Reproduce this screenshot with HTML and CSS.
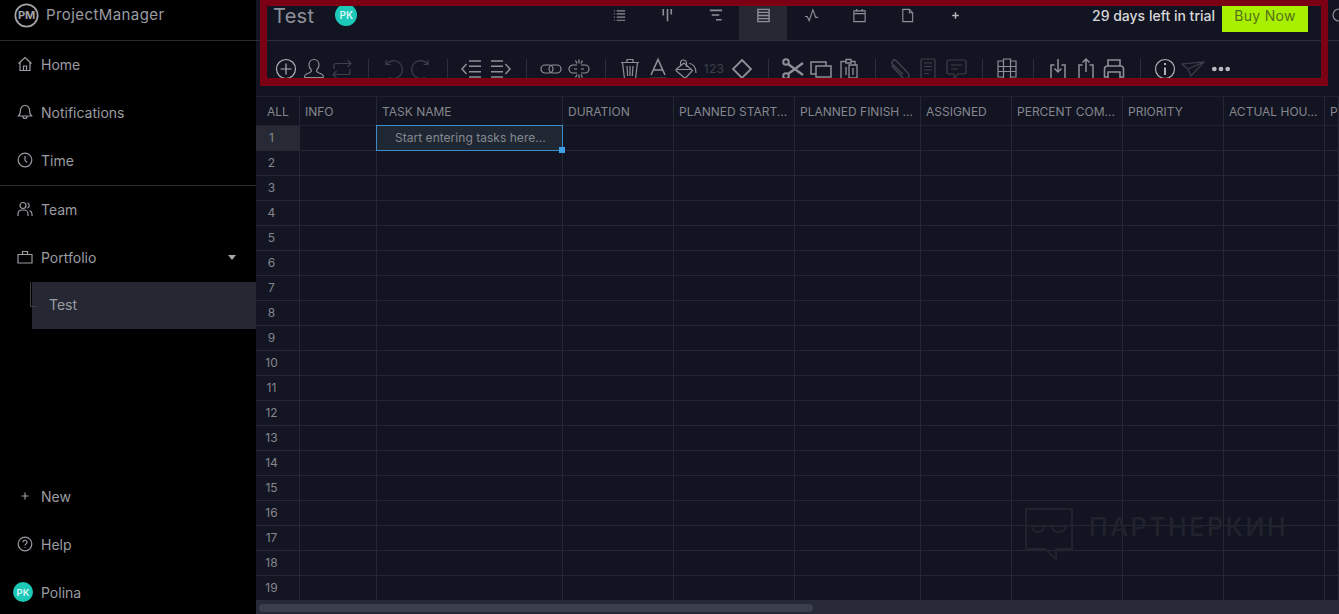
FILE: index.html
```html
<!DOCTYPE html>
<html lang="en">
<head>
<meta charset="utf-8">
<title>ProjectManager</title>
<link rel="stylesheet" href="styles.css">
</head>
<body>
<div class="app">
  <aside class="sidebar">
    <div class="brand">
      <svg class="brand-mark" viewBox="0 0 26 26"><circle cx="13" cy="13" r="11.6"/></svg>
      <span class="brand-pm">PM</span>
      <span class="brand-name">ProjectManager</span>
    </div>
    <nav class="nav nav-main">
      <a class="nav-item"><svg class="nav-icon" viewBox="0 0 16 16"><path d="M1.500 7.500 8 1.500l6.500 6M3 6.500V14.500h10V6.500M6.500 14.500V10h3v4.500"/></svg>Home</a>
      <a class="nav-item"><svg class="nav-icon" viewBox="0 0 16 16"><path d="M8 1.500a4.500 4.500 0 0 0-4.500 4.500c0 3.500-1 5-2 6h13c-1-1-2-2.500-2-6A4.500 4.500 0 0 0 8 1.500ZM6 12.500a2 2 0 0 0 4 0"/></svg>Notifications</a>
      <a class="nav-item"><svg class="nav-icon" viewBox="0 0 16 16"><circle cx="8" cy="8" r="6.800"/><path d="M8 4v4.300l2 2.200"/></svg>Time</a>
    </nav>
    <nav class="nav">
      <a class="nav-item"><svg class="nav-icon" viewBox="0 0 16 16"><circle cx="6" cy="4.500" r="3"/><path d="M1 15v-2.500A4 4 0 0 1 5 9h2a4 4 0 0 1 4 4v2M10.500 1.800a3 3 0 0 1 0 5.400M12.500 9.500a4 4 0 0 1 2.500 3.500V15"/></svg>Team</a>
      <a class="nav-item"><svg class="nav-icon" viewBox="0 0 16 16"><path d="M1 5.500h14v8.500H1zM5.500 5.500V2.500h5v3"/></svg>Portfolio<span class="caret"></span></a>
      <div class="subnav"><a class="subnav-item">Test</a></div>
    </nav>
    <nav class="nav nav-bottom">
      <a class="nav-item nav-item-low"><svg class="nav-icon" viewBox="0 0 16 16"><path d="M8 4.500v7M4.500 8h7"/></svg>New</a>
      <a class="nav-item nav-item-low"><svg class="nav-icon" viewBox="0 0 16 16"><circle cx="8" cy="8" r="6.800"/><path d="M6 6.300a2 2 0 1 1 3 1.700c-.7.400-1 .8-1 1.500M8 11.200v.8"/></svg>Help</a>
      <a class="nav-item nav-item-low nav-user"><span class="avatar avatar-side">PK</span>Polina</a>
    </nav>
  </aside>

  <main class="main">
    <header class="topbar">
      <h1 class="title">Test</h1>
      <span class="avatar avatar-top">PK</span>
      <div class="tabs">
        <a class="tab"><svg class="icon-sm" viewBox="0 0 16 16"><path d="M5 3h9M5 6.300h9M5 9.700h9M5 13h9M2 3h1M2 6.300h1M2 9.700h1M2 13h1"/></svg></a>
        <a class="tab"><svg class="icon-sm" viewBox="0 0 16 16"><path d="M3.500 1v7M8 1v13M12 1v6" stroke-width="1.700"/></svg></a>
        <a class="tab"><svg class="icon-sm" viewBox="0 0 16 16"><path d="M2 2.500h13M4 7.500h8M8.500 12.500h6" stroke-width="1.700"/></svg></a>
        <a class="tab tab-active"><svg class="icon-sm" viewBox="0 0 16 16"><path d="M2 1.500h12v13H2zM2 4.700h12M2 8h12M2 11.300h12" stroke-width="1.500"/></svg></a>
        <a class="tab"><svg class="icon-sm" viewBox="0 0 16 16"><path d="M1 9h2.500l2 4.500L9.500 2l3 8H15"/></svg></a>
        <a class="tab"><svg class="icon-sm" viewBox="0 0 16 16"><path d="M2 3h12v11.500H2zM2 6h12M5 1v3M11 1v3"/></svg></a>
        <a class="tab"><svg class="icon-sm" viewBox="0 0 16 16"><path d="M3 1.500h7l3.500 3.500v9.500H3zM10 1.500V5h3.500"/></svg></a>
        <a class="tab tab-add"><svg class="icon-sm" viewBox="0 0 16 16"><path d="M8 4.500v7M4.500 8h7" stroke-width="1.600"/></svg></a>
      </div>
      <span class="trial">29 days left in trial</span>
      <a class="buy">Buy Now</a>
      <svg class="top-extra" viewBox="0 0 16 16"><circle cx="8" cy="8" r="6"/></svg>
    </header>

    <div class="toolbar">
      <a class="tool tool-bright"><svg viewBox="0 0 24 24"><circle cx="12" cy="12" r="9.500"/><path d="M12 6.500v11M6.500 12h11"/></svg></a>
      <a class="tool"><svg viewBox="0 0 24 24"><path d="M12 2.500c-3 0-5 2.300-5 5.500 0 2.200 1 3.800 2.300 5 .5 1.300-.3 2.300-2.300 3-2.500.8-4.300 1.600-4.300 3.500v1h18.600v-1c0-1.900-1.800-2.700-4.300-3.500-2-.7-2.800-1.700-2.300-3 1.300-1.200 2.300-2.800 2.300-5 0-3.200-2-5.500-5-5.500Z"/></svg></a>
      <a class="tool tool-off"><svg viewBox="0 0 24 24"><path d="M4 12V8.500a2 2 0 0 1 2-2h15M17.500 3 21 6.500 17.500 10M20 12v3.500a2 2 0 0 1-2 2H3M6.500 14 3 17.500 6.500 21"/></svg></a>
      <span class="sep"></span>
      <a class="tool tool-off"><svg viewBox="0 0 24 24"><path d="M5 3v4.500h4.500M5 7.500A9 9 0 1 1 8 20.500"/></svg></a>
      <a class="tool tool-off"><svg viewBox="0 0 24 24"><path d="M19 3v4.500h-4.500M19 7.500A9 9 0 1 0 16 20.500"/></svg></a>
      <span class="sep"></span>
      <a class="tool"><svg viewBox="0 0 24 24"><path d="M6.500 7 2 12l4.500 5" stroke-width="1.500"/><path d="M9 4h12M9 9.300h12M9 14.700h12M9 20h12" stroke-width="1.500"/></svg></a>
      <a class="tool"><svg viewBox="0 0 24 24"><path d="M17.500 7l4.500 5-4.500 5" stroke-width="1.500"/><path d="M3 4h12M3 9.300h12M3 14.700h12M3 20h12" stroke-width="1.500"/></svg></a>
      <span class="sep"></span>
      <a class="tool"><svg viewBox="0 0 24 24"><rect x="2" y="8" width="12" height="8" rx="4"/><rect x="10" y="8" width="12" height="8" rx="4"/></svg></a>
      <a class="tool"><svg viewBox="0 0 24 24"><path d="M10 8H6a4 4 0 0 0 0 8h4M14 8h4a4 4 0 0 1 0 8h-4M7 12h3M14 12h3M12 2.500v4M12 17.500v4M8.500 3.500l1.500 3M15.500 3.500 14 6.500M8.500 20.500l1.500-3M15.500 20.500l-1.500-3"/></svg></a>
      <span class="sep"></span>
      <a class="tool"><svg viewBox="0 0 24 24"><path d="M3 5.500h18M9 5.500V2.500h6v3M4.500 5.500 6.500 22h11l2-16.500M9 9l.7 10M12 9v10M15 9l-.7 10"/></svg></a>
      <a class="tool"><svg viewBox="0 0 24 24"><path d="M5 18 12 2.500 19 18M7.500 13h9M4 21.500h16" stroke-width="1.600"/></svg></a>
      <a class="tool"><svg viewBox="0 0 24 24"><path d="M2.500 12 10 6l8.500 7.500-6 6.500c-1 1-2 1-3 0l-7-6c-.8-.7-.8-1.300 0-2ZM3 12.500h15M6.500 9V6a3 3 0 0 1 6 0v4M15 6.500c4 0 7 3.500 7 9.500"/></svg></a>
      <span class="tool tool-off tool-num">123</span>
      <a class="tool"><svg viewBox="0 0 24 24"><path d="M12 3l9 9-9 9-9-9Z" stroke-width="1.800"/></svg></a>
      <span class="sep"></span>
      <a class="tool"><svg viewBox="0 0 24 24"><circle cx="5" cy="5" r="2.800" stroke-width="2"/><circle cx="5" cy="19" r="2.800" stroke-width="2"/><path d="M7 7l15 11M7 17 22 6" stroke-width="2.400"/></svg></a>
      <a class="tool"><svg viewBox="0 0 24 24"><path d="M7 17H2V5h15v4M7 9h15v11H7z" stroke-width="1.500"/></svg></a>
      <a class="tool"><svg viewBox="0 0 24 24"><path d="M9 4.500H4V22h14v-1M14 4.500h4V8M9 2.500h5V6H9zM12 8h8v13h-8zM9 10v8M16 11v7" stroke-width="1.300"/></svg></a>
      <span class="sep"></span>
      <a class="tool tool-off"><svg viewBox="0 0 24 24"><path d="M3.500 8.500 15 21a3.500 3.500 0 0 0 5-5L8 3.500a2.500 2.500 0 0 0-3.500 3.500L15 17.500" stroke-width="1.600"/></svg></a>
      <a class="tool tool-off"><svg viewBox="0 0 24 24"><rect x="5" y="2" width="14" height="20" rx="1.500"/><path d="M8 6h8M8 9.500h8M8 13h8M8 16.500h5"/></svg></a>
      <a class="tool tool-off"><svg viewBox="0 0 24 24"><path d="M5 3h15a2 2 0 0 1 2 2v10a2 2 0 0 1-2 2h-6l-4 5v-5H5a2 2 0 0 1-2-2V5a2 2 0 0 1 2-2ZM7 8h11M7 12h7"/></svg></a>
      <span class="sep"></span>
      <a class="tool"><svg viewBox="0 0 24 24"><path d="M8.500 2h7v20h-7zM8.500 4H3v16h5.500M15.500 4H21v16h-5.500M3 9.500h5.500M3 14.500h5.500M15.500 9.500H21M15.500 14.500H21M8.500 9.500h7M8.500 14.500h7"/></svg></a>
      <span class="sep"></span>
      <a class="tool"><svg viewBox="0 0 24 24"><path d="M8.500 8H5v14h14V8h-3.500M12 2v13M8.500 11.500 12 15l3.500-3.500" stroke-width="1.500"/></svg></a>
      <a class="tool"><svg viewBox="0 0 24 24"><path d="M8.500 8H5v14h14V8h-3.500M12 15V2M8.500 5.500 12 2l3.500 3.500" stroke-width="1.500"/></svg></a>
      <a class="tool"><svg viewBox="0 0 24 24"><path d="M6 9V3h12v6M6 20H2.500v-8a3 3 0 0 1 3-3h13a3 3 0 0 1 3 3v8H18M6 15h12v7H6z" stroke-width="1.600"/></svg></a>
      <span class="sep"></span>
      <a class="tool tool-bright"><svg viewBox="0 0 24 24"><circle cx="12" cy="12" r="9.500"/><path d="M12 10.500V18M12 6v2" stroke-width="2"/></svg></a>
      <a class="tool tool-off"><svg viewBox="0 0 24 24"><path d="M1 7 23 5 10 19 7 12ZM7 12 23 5"/></svg></a>
      <a class="tool tool-dots"><svg viewBox="0 0 24 24"><circle cx="4" cy="12" r="2.800"/><circle cx="12" cy="12" r="2.800"/><circle cx="20" cy="12" r="2.800"/></svg></a>
    </div>

    <div class="grid-wrap">
      <table class="grid">
        <colgroup>
          <col class="c-all"><col class="c-info"><col class="c-task"><col class="c-dur"><col class="c-start"><col class="c-finish"><col class="c-assign"><col class="c-pct"><col class="c-prio"><col class="c-hours"><col class="c-last">
        </colgroup>
        <thead>
          <tr><th class="all">ALL</th><th>INFO</th><th>TASK NAME</th><th>DURATION</th><th>PLANNED START...</th><th>PLANNED FINISH ...</th><th>ASSIGNED</th><th>PERCENT COM...</th><th>PRIORITY</th><th>ACTUAL HOU...</th><th>PL</th></tr>
        </thead>
        <tbody>
          <tr><td class="num num-active">1</td><td></td><td class="selected"><div class="cell-edit">Start entering tasks here...<span class="handle"></span></div></td><td></td><td></td><td></td><td></td><td></td><td></td><td></td><td></td></tr>
          <tr><td class="num">2</td><td></td><td></td><td></td><td></td><td></td><td></td><td></td><td></td><td></td><td></td></tr>
          <tr><td class="num">3</td><td></td><td></td><td></td><td></td><td></td><td></td><td></td><td></td><td></td><td></td></tr>
          <tr><td class="num">4</td><td></td><td></td><td></td><td></td><td></td><td></td><td></td><td></td><td></td><td></td></tr>
          <tr><td class="num">5</td><td></td><td></td><td></td><td></td><td></td><td></td><td></td><td></td><td></td><td></td></tr>
          <tr><td class="num">6</td><td></td><td></td><td></td><td></td><td></td><td></td><td></td><td></td><td></td><td></td></tr>
          <tr><td class="num">7</td><td></td><td></td><td></td><td></td><td></td><td></td><td></td><td></td><td></td><td></td></tr>
          <tr><td class="num">8</td><td></td><td></td><td></td><td></td><td></td><td></td><td></td><td></td><td></td><td></td></tr>
          <tr><td class="num">9</td><td></td><td></td><td></td><td></td><td></td><td></td><td></td><td></td><td></td><td></td></tr>
          <tr><td class="num">10</td><td></td><td></td><td></td><td></td><td></td><td></td><td></td><td></td><td></td><td></td></tr>
          <tr><td class="num">11</td><td></td><td></td><td></td><td></td><td></td><td></td><td></td><td></td><td></td><td></td></tr>
          <tr><td class="num">12</td><td></td><td></td><td></td><td></td><td></td><td></td><td></td><td></td><td></td><td></td></tr>
          <tr><td class="num">13</td><td></td><td></td><td></td><td></td><td></td><td></td><td></td><td></td><td></td><td></td></tr>
          <tr><td class="num">14</td><td></td><td></td><td></td><td></td><td></td><td></td><td></td><td></td><td></td><td></td></tr>
          <tr><td class="num">15</td><td></td><td></td><td></td><td></td><td></td><td></td><td></td><td></td><td></td><td></td></tr>
          <tr><td class="num">16</td><td></td><td></td><td></td><td></td><td></td><td></td><td></td><td></td><td></td><td></td></tr>
          <tr><td class="num">17</td><td></td><td></td><td></td><td></td><td></td><td></td><td></td><td></td><td></td><td></td></tr>
          <tr><td class="num">18</td><td></td><td></td><td></td><td></td><td></td><td></td><td></td><td></td><td></td><td></td></tr>
          <tr><td class="num">19</td><td></td><td></td><td></td><td></td><td></td><td></td><td></td><td></td><td></td><td></td></tr>
        </tbody>
      </table>
    </div>
    <div class="hscroll"><div class="hscroll-thumb"></div></div>

    <div class="highlight-frame"></div>
    <div class="watermark">
      <svg class="watermark-mark" viewBox="0 0 50 54"><path d="M2 2h46v40H32v10L21 42H2Z"/><path d="M8 19h12a6 6 0 0 1-12 0ZM28 19h14a7 6 0 0 1-14 0ZM20 19h8"/></svg>
      <span class="watermark-text">ПАРТНЕРКИН</span>
    </div>
  </main>
</div>
</body>
</html>
```

FILE: styles.css
```css
* { box-sizing: border-box; }

html, body {
  margin: 0;
  height: 100%;
  overflow: hidden;
  background: #121421;
  font-family: Inter, "Liberation Sans", sans-serif;
}

svg { fill: none; stroke: currentColor; stroke-width: 1.2; }

.app { display: flex; height: 614px; }

/* Sidebar */
.sidebar {
  width: 256px;
  flex: none;
  display: flex;
  flex-direction: column;
  background: #000;
  color: #9a9ca2;
  font-size: 14px;
}

.brand {
  position: relative;
  height: 41px;
  flex: none;
  display: flex;
  align-items: center;
  padding: 0 0 11px 14px;
  border-bottom: 1px solid #2a2b32;
}
.brand-mark { width: 25px; height: 25px; color: #a2a4a9; margin-top: 1px; stroke-width: 1.800; }
.brand-pm {
  position: absolute;
  left: 14px;
  top: 3px;
  width: 25px;
  height: 25px;
  line-height: 25px;
  text-align: center;
  font-size: 11px;
  font-weight: 700;
  letter-spacing: -.2px;
  color: #a2a4a9;
}
.brand-name { margin-left: 7px; font-size: 15px; letter-spacing: .42px; }

.nav { display: flex; flex-direction: column; }
.nav-main { border-bottom: 1px solid #2a2b32; }
.nav-bottom { margin-top: auto; margin-bottom: -2px; }

.nav-item {
  height: 48px;
  display: flex;
  align-items: center;
  gap: 8px;
  padding: 0 0 2px 17px;
}
.nav-item-low { padding-bottom: 0; }
.nav-icon { width: 16px; height: 16px; flex: none; }
.nav-user { padding-left: 13px; }

.caret {
  margin-left: auto;
  margin-right: 20px;
  border-left: 4px solid transparent;
  border-right: 4px solid transparent;
  border-top: 5px solid #a6a8ad;
}

.subnav {
  margin: 0 0 0 30px;
  padding-left: 2px;
  height: 47px;
  position: relative;
}
.subnav::before {
  content: "";
  position: absolute;
  left: 0;
  top: 0;
  width: 6px;
  height: 24px;
  border-left: 1px solid #3a3c46;
  border-bottom: 1px solid #3a3c46;
}
.subnav-item {
  display: flex;
  align-items: center;
  height: 47px;
  padding: 0 0 2px 17px;
  background: #252833;
  color: #9a9ca2;
}

.avatar {
  display: inline-flex;
  align-items: center;
  justify-content: center;
  border-radius: 50%;
  background: #1cc8b8;
  color: #d8f7f3;
  font-weight: 600;
  flex: none;
}
.avatar-side { width: 20px; height: 20px; font-size: 9.500px; }
.avatar-top { width: 22px; height: 22px; font-size: 10px; margin-left: 21px; }

/* Main */
.main {
  position: relative;
  flex: 1;
  min-width: 0;
  display: flex;
  flex-direction: column;
  overflow: hidden;
  color: #8d8f98;
}

.topbar {
  height: 41px;
  flex: none;
  display: flex;
  align-items: flex-start;
  padding-left: 17px;
  border-bottom: 1px solid #2c2f3a;
}
.topbar > .avatar-top { margin-top: 4px; }
.title {
  margin: 4px 0 0;
  font-size: 20px;
  line-height: 24px;
  font-weight: 400;
  color: #8f929b;
  letter-spacing: .3px;
}

.tabs { display: flex; position: absolute; left: 339px; top: 0; }
.tab {
  width: 48px;
  height: 40px;
  display: flex;
  align-items: flex-start;
  justify-content: center;
  padding-top: 8px;
  color: #8d8f98;
}
.tab-active { background: #262933; }
.tab-add { color: #b4b6bb; }
.icon-sm { width: 15px; height: 15px; }

.trial {
  margin-left: auto;
  margin-top: 7px;
  font-size: 14px;
  line-height: 17px;
  font-weight: 500;
  color: #d6d7da;
}
.buy {
  width: 86px;
  height: 32px;
  margin-left: 7px;
  margin-right: 31px;
  display: flex;
  align-items: flex-end;
  justify-content: center;
  padding-bottom: 8px;
  font-size: 14px;
  line-height: 17px;
  letter-spacing: .3px;
  color: #55701a;
  background: #a9f000;
}
.top-extra {
  position: absolute;
  right: -8px;
  top: 7px;
  width: 16px;
  height: 16px;
  color: #8d8f98;
}

.toolbar {
  height: 56px;
  flex: none;
  display: flex;
  align-items: center;
  padding: 0 0 0 16px;
  border-bottom: 1px solid #1f222d;
}
.tool {
  width: 28px;
  height: 24px;
  flex: none;
  display: flex;
  align-items: center;
  justify-content: center;
  color: #8d8f98;
}
.tool svg { width: 24px; height: 24px; }
.tool-bright { color: #b0b2b8; }
.tool-off { color: #3d404b; }
.tool-num { font-size: 12px; letter-spacing: .3px; }
.tool-dots { color: #b8bac0; }
.tool-dots svg { fill: currentColor; stroke: none; width: 20px; height: 20px; }
.sep {
  width: 1px;
  height: 20px;
  flex: none;
  margin: 0 10px 0 12px;
  background: #2c2f3a;
}

/* Grid */
.grid-wrap { flex: 1; min-height: 0; overflow: hidden; }
.grid {
  table-layout: fixed;
  width: 1083px;
  border-collapse: separate;
  border-spacing: 0;
  font-size: 12px;
}
.c-all { width: 44px; }
.c-info { width: 77px; }
.c-task { width: 186px; }
.c-dur { width: 111px; }
.c-start { width: 121px; }
.c-finish { width: 126px; }
.c-assign { width: 91px; }
.c-pct { width: 111px; }
.c-prio { width: 101px; }
.c-hours { width: 101px; }
.c-last { width: 14px; }

.grid th {
  height: 29px;
  padding: 0 0 0 5px;
  text-align: left;
  font-weight: 400;
  white-space: nowrap;
  overflow: hidden;
  color: #85878f;
  border-right: 1px solid #252834;
  border-bottom: 1px solid #1f222d;
}
.grid th.all { padding-left: 11px; }
.grid td {
  height: 25px;
  padding: 0;
  border-right: 1px solid #252834;
  border-bottom: 1px solid #252834;
}
.grid td.num {
  padding: 0 12px 2px 0;
  text-align: center;
  color: #85878f;
  background: #131522;
}
.grid td.num-active { background: #272a34; }
.grid td.selected { position: relative; overflow: visible; }

.cell-edit {
  position: absolute;
  left: -1px;
  top: -1px;
  width: 187px;
  height: 26px;
  padding: 0 0 2px 18px;
  display: flex;
  align-items: center;
  font-size: 12px;
  letter-spacing: .03px;
  color: #85878f;
  background: #1f2733;
  border: 1px solid #3a8ccb;
}
.handle {
  position: absolute;
  right: -3px;
  bottom: -3px;
  width: 6px;
  height: 6px;
  background: #3fa0e8;
}

.hscroll {
  height: 14px;
  flex: none;
  padding: 4px 0 2px 3px;
  background: #272a36;
}
.hscroll-thumb {
  width: 554px;
  height: 8px;
  border-radius: 4px;
  background: #3b3f4b;
}

/* Overlays */
.highlight-frame {
  position: absolute;
  left: 4px;
  top: 0;
  width: 1068px;
  height: 86px;
  border-style: solid;
  border-color: #7b0014;
  border-width: 6px 7px 8px;
  pointer-events: none;
}

.watermark {
  position: absolute;
  left: 768px;
  top: 507px;
  display: flex;
  align-items: center;
  gap: 15px;
  color: #20232e;
  pointer-events: none;
}
.watermark-mark { width: 50px; height: 54px; stroke-width: 2; }
.watermark-text {
  margin-top: -14px;
  font-size: 25px;
  font-weight: 500;
  letter-spacing: 2.600px;
}
```
